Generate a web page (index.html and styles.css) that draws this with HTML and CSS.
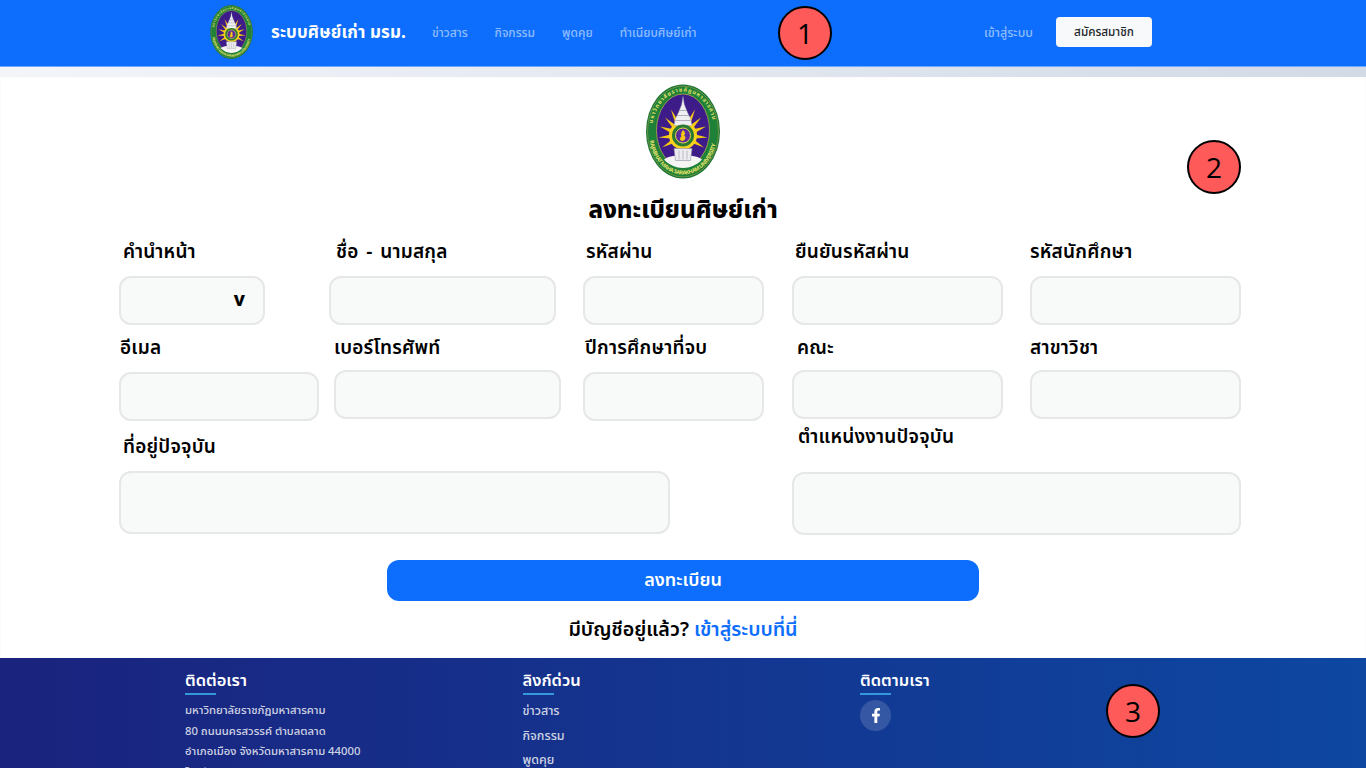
FILE: index.html
```html
<!DOCTYPE html>
<html lang="th">
<head>
<meta charset="utf-8">
<title>ลงทะเบียนศิษย์เก่า</title>
<link rel="stylesheet" href="styles.css">
</head>
<body>
<svg class="defs" width="0" height="0" aria-hidden="true">
  <defs>
    <symbol id="seal" viewBox="0 0 74 94">
      <ellipse cx="37" cy="47" rx="37" ry="47" fill="#197335"/>
      <ellipse cx="37" cy="47" rx="35.500" ry="45.500" fill="#1f8038" stroke="#b9b04a" stroke-width=".5"/>
      <ellipse cx="37" cy="46" rx="26.500" ry="36.500" fill="#3d1c8a" stroke="#d8c94c" stroke-width=".6"/>
      <path id="sealTop" d="M6 47a31 40 0 0 1 62 0" fill="none"/>
      <path id="sealBot" d="M3.500 50a33.500 40 0 0 0 67 0" fill="none"/>
      <text class="seal-text"><textPath href="#sealTop" textLength="92" startOffset="8">มหาวิทยาลัยราชภัฏมหาสารคาม</textPath></text>
      <text class="seal-text"><textPath href="#sealBot" textLength="100" startOffset="6">RAJABHAT MAHA SARAKHAM UNIVERSITY</textPath></text>
      <g id="rays" fill="#f7c80f">
        <polygon points="40.300,53.300 33.700,48.700 49,25"/>
        <polygon points="39.300,54.300 34.700,47.700 55,33"/>
        <polygon points="38,54.900 36,47.100 60,42"/>
        <polygon points="36.600,55 37.400,47 61.500,53"/>
        <polygon points="35.300,54.600 38.700,47.400 58,63"/>
      </g>
      <use href="#rays" transform="matrix(-1 0 0 1 74 0)"/>
      <circle cx="37" cy="51" r="14" fill="#f7d21e"/>
      <path d="M37 12 38.300 20 41.500 28 44.500 34 46 41H28L29.500 34 32.500 28 35.700 20Z" fill="#efeff2" stroke="#9a9aa8" stroke-width=".4"/>
      <path d="M33 26H41M31 31H43M29.500 36H44.500" stroke="#9797a6" stroke-width=".7"/>
      <circle cx="37" cy="51" r="11" fill="#2a7a35"/>
      <circle cx="37" cy="51" r="7.500" fill="#5b2aa0" stroke="#e8d64a" stroke-width="1"/>
      <path d="M37 45.500c2.500 2 2.500 4.500 1 5.500 2.500 1 1.500 5.500-1.800 5.500-2.700 0-2.700-3.500-.8-4.500-1-1.800 0-4.500 1.600-6.500Z" fill="#f5c518"/>
      <path d="M18 75C25 69 49 69 56 75 51 80.500 44 83.500 37 83.500S23 80.500 18 75Z" fill="#f7f5f3"/>
      <path d="M28 64H46L44.500 76H29.500Z" fill="#ececf0" stroke="#8f8f9f" stroke-width=".6"/>
      <path d="M33 66V75M37 66V75M41 66V75" stroke="#9a9aa8" stroke-width=".6"/>
    </symbol>
  </defs>
</svg>

<div class="page">
  <header class="topbar">
    <div class="brand">
      <svg class="brand-logo" aria-label="ตรามหาวิทยาลัย"><use href="#seal"/></svg>
      <span class="brand-name">ระบบศิษย์เก่า มรม.</span>
    </div>
    <nav class="nav-links">
      <a href="#">ข่าวสาร</a>
      <a href="#">กิจกรรม</a>
      <a href="#">พูดคุย</a>
      <a href="#">ทำเนียบศิษย์เก่า</a>
    </nav>
    <div class="nav-actions">
      <a href="#" class="login-link">เข้าสู่ระบบ</a>
      <a href="#" class="signup-btn">สมัครสมาชิก</a>
    </div>
  </header>
  <div class="strip"></div>

  <main class="card">
    <svg class="form-logo" aria-label="ตรามหาวิทยาลัย"><use href="#seal"/></svg>
    <h1 class="form-title">ลงทะเบียนศิษย์เก่า</h1>
    <form class="reg-form">
      <div class="row row-1">
        <div class="field f-prefix"><label class="lbl in4">คำนำหน้า</label><div class="input select-box"><span class="caret">v</span></div></div>
        <div class="field f-name"><label class="lbl in7 wide">ชื่อ - นามสกุล</label><div class="input"></div></div>
        <div class="field f-c3"><label class="lbl in3">รหัสผ่าน</label><div class="input"></div></div>
        <div class="field f-c4"><label class="lbl in3">ยืนยันรหัสผ่าน</label><div class="input"></div></div>
        <div class="field f-c5"><label class="lbl">รหัสนักศึกษา</label><div class="input"></div></div>
      </div>
      <div class="row row-2">
        <div class="field f-email"><label class="lbl in1">อีเมล</label><div class="input"></div></div>
        <div class="field f-phone up"><label class="lbl">เบอร์โทรศัพท์</label><div class="input"></div></div>
        <div class="field f-c3"><label class="lbl in2">ปีการศึกษาที่จบ</label><div class="input"></div></div>
        <div class="field f-c4 up"><label class="lbl in5">คณะ</label><div class="input"></div></div>
        <div class="field f-c5 up"><label class="lbl">สาขาวิชา</label><div class="input"></div></div>
      </div>
      <div class="row row-3">
        <div class="field f-addr"><label class="lbl in4">ที่อยู่ปัจจุบัน</label><div class="input tall"></div></div>
        <div class="field f-job"><label class="lbl in6">ตำแหน่งงานปัจจุบัน</label><div class="input tall"></div></div>
      </div>
      <button type="button" class="submit">ลงทะเบียน</button>
      <p class="have-account">มีบัญชีอยู่แล้ว? <a href="#">เข้าสู่ระบบที่นี่</a></p>
    </form>
  </main>

  <footer class="footer">
    <div class="foot-col">
      <h3>ติดต่อเรา</h3>
      <p>มหาวิทยาลัยราชภัฏมหาสารคาม</p>
      <p>80 ถนนนครสวรรค์ ตำบลตลาด</p>
      <p>อำเภอเมือง จังหวัดมหาสารคาม 44000</p>
      <p>โทรศัพท์ 043-722-118</p>
    </div>
    <div class="foot-col links">
      <h3>ลิงก์ด่วน</h3>
      <a href="#">ข่าวสาร</a>
      <a href="#">กิจกรรม</a>
      <a href="#">พูดคุย</a>
    </div>
    <div class="foot-col">
      <h3>ติดตามเรา</h3>
      <a href="#" class="fb" aria-label="Facebook">
        <svg viewBox="0 0 320 512" width="10" height="15"><path fill="#fff" d="M279.14 288l14.22-92.66h-88.91v-60.13c0-25.35 12.42-50.06 52.24-50.06h40.42V6.260S260.430 0 225.360 0c-73.220 0-121.080 44.380-121.080 124.720v70.620H22.890V288h81.390v224h100.170V288z"/></svg>
      </a>
    </div>
  </footer>

  <span class="badge b1">1</span>
  <span class="badge b2">2</span>
  <span class="badge b3">3</span>
</div>
</body>
</html>
```
FILE: styles.css
```css
* { box-sizing: border-box; }
html, body { margin: 0; padding: 0; }
body { font-family: "Noto Sans Thai", "Noto Sans", "Liberation Sans", sans-serif; background: #fff; color: #000; }
.defs { position: absolute; }
.page { position: relative; height: 768px; overflow: hidden; }
a { text-decoration: none; }

.topbar { height: 67px; background: #0d6efd; border-bottom: 1px solid #6ea8fe; display: flex; align-items: center; padding: 0 214px 2px 210px; }
.brand { display: flex; align-items: center; gap: 18px; }
.brand-logo { width: 43px; height: 54px; display: block; }
.brand-name { color: #fff; font-size: 17px; font-weight: 700; letter-spacing: .1px; white-space: nowrap; width: 136px; padding-top: 1px; }
.nav-links { display: flex; gap: 27px; margin-left: 25px; padding-top: 2px; font-size: 12px; font-weight: 500; }
.nav-links a, .login-link { color: rgba(255,255,255,.55); white-space: nowrap; }
.nav-actions { margin-left: auto; display: flex; align-items: center; gap: 23px; font-size: 12.500px; font-weight: 500; }
.login-link { padding-top: 2px; }
.signup-btn { width: 96px; height: 30px; background: #f8f9fa; color: #212529; border-radius: 4px; display: flex; align-items: center; justify-content: center; font-size: 11.700px; }

.strip { height: 10px; background: linear-gradient(90deg, #f3f5f9, #d2dae6); }

.card { height: 581px; background: #fff; box-shadow: inset 0 0 2px rgba(0,0,0,.06); display: flex; flex-direction: column; align-items: center; padding-top: 7px; }
.form-logo { width: 74px; height: 95px; display: block; }
.seal-text { font-size: 5.500px; font-weight: 700; fill: #e8e36a; }
.form-title { margin: 14px 0 0; font-size: 24px; line-height: 36px; font-weight: 800; text-align: center; }

.reg-form { align-self: stretch; padding: 0 125px 0 119px; }
.row { display: flex; align-items: flex-start; }
.row-1 { margin-top: 12px; height: 96px; }
.row-2 { height: 99px; }
.row-3 { height: 124px; }
.field { flex: none; }
.f-prefix { width: 146px; margin-right: 64px; }
.f-name { width: 227px; margin-right: 27px; }
.f-email { width: 200px; margin-right: 15px; }
.f-phone { width: 227px; margin-right: 22px; }
.f-c3 { width: 181px; margin-right: 28px; }
.f-c4 { width: 211px; margin-right: 27px; }
.f-c5 { width: 211px; }
.f-addr { width: 551px; margin-right: 122px; }
.f-job { width: 449px; margin-top: -10px; }
.lbl { display: block; font-size: 19px; font-weight: 600; letter-spacing: .2px; line-height: 24px; height: 24px; white-space: nowrap; }
.wide { word-spacing: 2.500px; }
.in1 { padding-left: 1px; }
.in2 { padding-left: 2px; }
.in3 { padding-left: 3px; }
.in4 { padding-left: 4px; }
.in5 { padding-left: 5px; }
.in6 { padding-left: 6px; }
.in7 { padding-left: 7px; }
.input { height: 49px; margin-top: 11px; background: #f8f9f9; border: 2px solid #e5e8e7; border-radius: 12px; }
.up .input { margin-top: 9px; }
.input.tall { height: 63px; }
.f-job .input.tall { height: 62.500px; margin-top: 22px; }
.select-box { display: flex; align-items: center; justify-content: flex-end; padding-right: 18px; }
.caret { font-size: 19px; font-weight: 800; line-height: 1; }

.submit { display: block; width: 592px; height: 41px; margin: 0 0 0 268px; border: 0; border-radius: 12px; background: #0d6efd; color: #fff; font: inherit; font-size: 18px; font-weight: 600; }
.have-account { margin: 15px 0 0 6px; text-align: center; font-size: 19.700px; line-height: 28px; font-weight: 600; }
.have-account a { color: #0d6efd; }

.footer { height: 110px; background: linear-gradient(90deg, #1a237e, #0d47a1); display: flex; padding: 11px 0 0 185px; color: rgba(255,255,255,.8); }
.foot-col { width: 337.500px; font-size: 11.300px; font-weight: 500; }
.foot-col h3 { margin: 0 0 4px; width: max-content; font-size: 16.500px; line-height: 24px; font-weight: 600; color: #fff; padding-bottom: 1px; }
.foot-col h3::after { content: ""; display: block; width: 31px; height: 2px; background: #3498db; }
.foot-col h3 + p { margin-top: 5px; }
.foot-col p { margin: 0; line-height: 20.500px; }
.foot-col.links a { display: block; color: rgba(255,255,255,.8); font-size: 12.500px; line-height: 24.500px; }
.fb { width: 31px; height: 31px; border-radius: 50%; background: rgba(255,255,255,.15); display: flex; align-items: center; justify-content: center; margin-top: 1px; }

.badge { position: absolute; width: 54px; height: 54px; border: 2px solid #000; border-radius: 50%; background: #ff5a5a; color: #000; font-family: "Open Sans", sans-serif; font-size: 28px; display: flex; align-items: center; justify-content: center; }
.b1 { left: 778px; top: 6px; }
.b2 { left: 1187px; top: 140px; }
.b3 { left: 1106px; top: 684px; }
```
